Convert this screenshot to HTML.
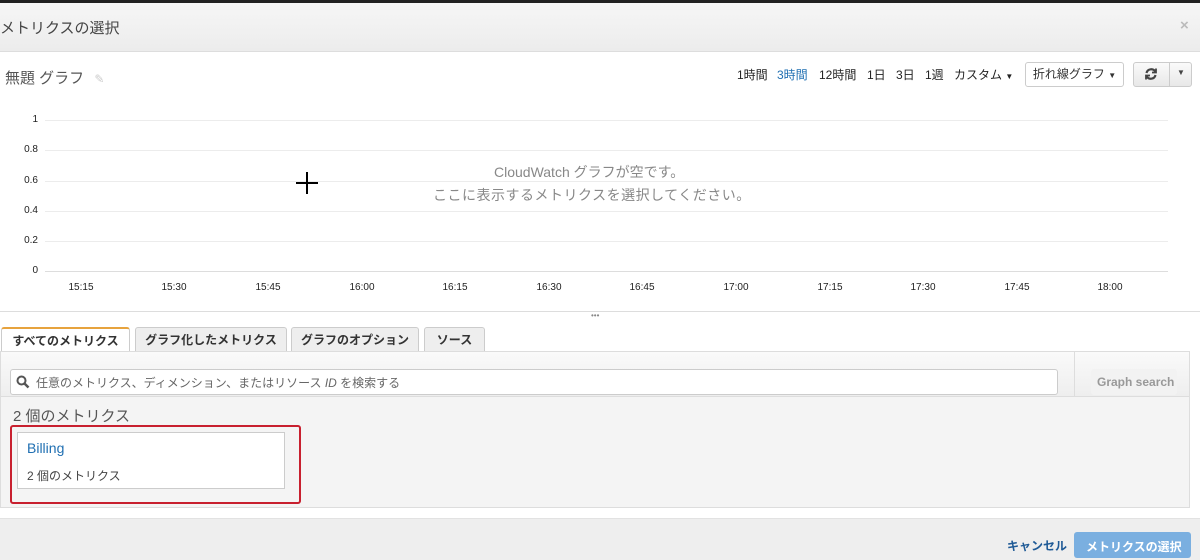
<!DOCTYPE html><html><head><meta charset="utf-8"><style>
*{margin:0;padding:0;box-sizing:border-box}
body{width:1200px;height:560px;position:relative;overflow:hidden;background:#fff;font-family:"Liberation Sans","Noto Sans CJK JP",sans-serif;color:#333}
.a{position:absolute;white-space:nowrap}
.yl{position:absolute;left:22px;width:16px;text-align:right;font-size:10px;color:#222}
.xl{position:absolute;top:282px;font-size:10px;color:#222;transform:translateX(-50%)}
.g{position:absolute;left:45px;width:1123px;height:1px;background:#ececec}
.tab{position:absolute;top:327px;height:25px;border:1px solid #ccc;border-bottom:none;background:#eee;font-size:12px;font-weight:bold;color:#333;text-align:center;line-height:24px;border-radius:3px 3px 0 0}
.t{position:absolute;top:66px;font-size:12px;color:#222;white-space:nowrap}
</style></head><body>
<div class="a" style="left:0;top:0;width:1200px;height:3px;background:#222"></div>
<div class="a" style="left:0;top:3px;width:1200px;height:49px;background:linear-gradient(#f6f6f6,#ececec);border-bottom:1px solid #ddd"></div>
<div class="a" style="left:0;top:17px;font-size:15px;color:#444">メトリクスの選択</div>
<div class="a" style="left:1180px;top:17px;font-size:15px;color:#bbb;font-weight:bold">×</div>
<div class="a" style="left:5px;top:67px;font-size:15px;color:#555">無題 グラフ <span style="color:#ccc;font-size:12px;margin-left:6px">✎</span></div>
<div class="t" style="left:737px">1時間</div>
<div class="t" style="left:777px;color:#1f6fb2">3時間</div>
<div class="t" style="left:819px">12時間</div>
<div class="t" style="left:867px">1日</div>
<div class="t" style="left:896px">3日</div>
<div class="t" style="left:925px">1週</div>
<div class="t" style="left:954px">カスタム <span style="font-size:8px">▼</span></div>
<div class="a" style="left:1025px;top:62px;width:99px;height:25px;border:1px solid #ccc;border-radius:3px;font-size:12px;line-height:23px;text-align:center;color:#333">折れ線グラフ <span style="font-size:8px">▼</span></div>
<div class="a" style="left:1133px;top:62px;width:59px;height:25px;border:1px solid #ccc;border-radius:3px;background:linear-gradient(#fafafa,#e8e8e8)"></div>
<div class="a" style="left:1169px;top:63px;width:1px;height:23px;background:#ccc"></div>
<svg class="a" style="left:1144px;top:67px" width="14" height="14" viewBox="0 0 14 14" fill="none" stroke="#444" stroke-width="2.2"><path d="M2.5 6 A4.8 4.8 0 0 1 11.5 5"/><path d="M11.5 8 A4.8 4.8 0 0 1 2.5 9"/><path d="M12 1.5 v4 h-4" stroke-width="1.8"/><path d="M2 12.5 v-4 h4" stroke-width="1.8"/></svg>
<div class="a" style="left:1177px;top:68px;font-size:8px;color:#444">▼</div>
<div class="g" style="top:120px"></div><div class="g" style="top:150px"></div><div class="g" style="top:181px"></div><div class="g" style="top:211px"></div><div class="g" style="top:241px"></div><div class="g" style="top:271px;background:#ddd"></div>
<div class="yl" style="top:114px">1</div><div class="yl" style="top:144px">0.8</div><div class="yl" style="top:175px">0.6</div><div class="yl" style="top:205px">0.4</div><div class="yl" style="top:235px">0.2</div><div class="yl" style="top:265px">0</div>
<div class="xl" style="left:81px">15:15</div><div class="xl" style="left:174px">15:30</div><div class="xl" style="left:268px">15:45</div><div class="xl" style="left:362px">16:00</div><div class="xl" style="left:455px">16:15</div><div class="xl" style="left:549px">16:30</div><div class="xl" style="left:642px">16:45</div><div class="xl" style="left:736px">17:00</div><div class="xl" style="left:830px">17:15</div><div class="xl" style="left:923px">17:30</div><div class="xl" style="left:1017px">17:45</div><div class="xl" style="left:1110px">18:00</div>
<div class="a" style="left:494px;top:162px;font-size:14px;color:#888">CloudWatch グラフが空です。</div>
<div class="a" style="left:433px;top:185px;font-size:14px;color:#888;letter-spacing:0.5px">ここに表示するメトリクスを選択してください。</div>
<div class="a" style="left:296px;top:182px;width:22px;height:2px;background:#000"></div>
<div class="a" style="left:306px;top:172px;width:2px;height:22px;background:#000"></div>
<div class="a" style="left:0;top:311px;width:1200px;height:1px;background:#ddd"></div>
<div class="a" style="left:591px;top:311px;font-size:8px;color:#888">•••</div>
<div class="tab" style="left:1px;width:129px;background:#fff;border-top:2px solid #e7a33e;height:26px">すべてのメトリクス</div>
<div class="tab" style="left:135px;width:152px">グラフ化したメトリクス</div>
<div class="tab" style="left:291px;width:128px">グラフのオプション</div>
<div class="tab" style="left:424px;width:61px">ソース</div>
<div class="a" style="left:0;top:351px;width:1190px;height:157px;background:#f4f4f4;border:1px solid #ddd"></div>
<div class="a" style="left:1px;top:352px;width:1188px;height:45px;background:linear-gradient(#fafafa,#eee);border-bottom:1px solid #ddd"></div>
<div class="a" style="left:1074px;top:352px;width:1px;height:45px;background:#ddd"></div>
<div class="a" style="left:10px;top:369px;width:1048px;height:26px;background:#fff;border:1px solid #ccc;border-radius:3px"></div>
<svg class="a" style="left:16px;top:375px" width="14" height="14" viewBox="0 0 14 14" fill="none" stroke="#555" stroke-width="2"><circle cx="5.5" cy="5.5" r="4"/><path d="M8.5 8.5 L12.5 12.5" stroke-width="2.5"/></svg>
<div class="a" style="left:36px;top:374px;font-size:12px;color:#666">任意のメトリクス、ディメンション、またはリソース <i>ID</i> を検索する</div>
<div class="a" style="left:1091px;top:369px;width:86px;height:26px;background:#f2f2f2;border-radius:3px"></div>
<div class="a" style="left:1097px;top:375px;font-size:12px;color:#999;font-weight:bold">Graph search</div>
<div class="a" style="left:13px;top:405px;font-size:15px;color:#555">2 個のメトリクス</div>
<div class="a" style="left:10px;top:425px;width:291px;height:79px;border:2px solid #c8202f;border-radius:3px"></div>
<div class="a" style="left:17px;top:432px;width:268px;height:57px;background:#fff;border:1px solid #ccc"></div>
<div class="a" style="left:27px;top:440px;font-size:14px;color:#1f6fb2">Billing</div>
<div class="a" style="left:27px;top:467px;font-size:12px;color:#444">2 個のメトリクス</div>
<div class="a" style="left:0;top:518px;width:1200px;height:42px;background:#eee;border-top:1px solid #e2e2e2"></div>
<div class="a" style="left:1007px;top:537px;font-size:12px;font-weight:bold;color:#1f5a96">キャンセル</div>
<div class="a" style="left:1074px;top:532px;width:117px;height:26px;background:#7aafe0;border-radius:3px"></div>
<div class="a" style="left:1086px;top:538px;color:#fff;font-size:12px;font-weight:bold">メトリクスの選択</div>
</body></html>
